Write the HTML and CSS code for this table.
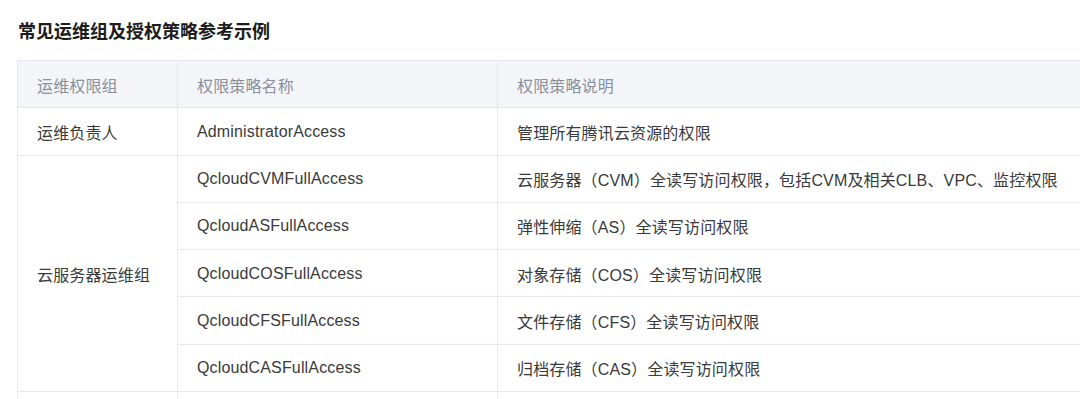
FILE: index.html
```html
<!DOCTYPE html>
<html lang="zh-CN">
<head>
<meta charset="utf-8">
<title>常见运维组及授权策略参考示例</title>
<link rel="stylesheet" href="styles.css">
</head>
<body>
<main class="page">
  <h3 class="title">常见运维组及授权策略参考示例</h3>
  <table class="grid">
    <colgroup>
      <col class="c1"><col class="c2"><col class="c3">
    </colgroup>
    <thead>
      <tr><th>运维权限组</th><th>权限策略名称</th><th>权限策略说明</th></tr>
    </thead>
    <tbody>
      <tr><td>运维负责人</td><td>AdministratorAccess</td><td>管理所有腾讯云资源的权限</td></tr>
      <tr><td rowspan="5">云服务器运维组</td><td>QcloudCVMFullAccess</td><td>云服务器（CVM）全读写访问权限，包括CVM及相关CLB、VPC、监控权限</td></tr>
      <tr><td>QcloudASFullAccess</td><td>弹性伸缩（AS）全读写访问权限</td></tr>
      <tr><td>QcloudCOSFullAccess</td><td>对象存储（COS）全读写访问权限</td></tr>
      <tr><td>QcloudCFSFullAccess</td><td>文件存储（CFS）全读写访问权限</td></tr>
      <tr><td>QcloudCASFullAccess</td><td>归档存储（CAS）全读写访问权限</td></tr>
      <tr class="next"><td></td><td></td><td></td></tr>
    </tbody>
  </table>
</main>
</body>
</html>
```

FILE: styles.css
```css
html, body {
  margin: 0;
  padding: 0;
  background: #ffffff;
  overflow: hidden;
}
.page {
  padding: 20px 0 0 17px;
  font-family: "Liberation Sans", "Noto Sans CJK SC", sans-serif;
}
.title {
  margin: 0 0 16px 1px;
  font-size: 18px;
  line-height: 24px;
  font-weight: 700;
  color: #1c1c1c;
}
.grid {
  border-collapse: collapse;
  table-layout: fixed;
  width: 1120px;
  font-size: 16px;
  letter-spacing: 0.15px;
}
.c1 { width: 160px; }
.c2 { width: 320px; }
.c3 { width: 640px; }
.grid th, .grid td {
  border: 1.5px solid #e6e9f1;
  height: 47.25px;
  padding: 1px 0 0 19px;
  text-align: left;
  vertical-align: middle;
  white-space: nowrap;
  box-sizing: border-box;
}
.grid th {
  background: #f3f5f9;
  color: #8a909c;
  font-weight: 400;
}
.grid td {
  color: #3a3a3a;
}
```
